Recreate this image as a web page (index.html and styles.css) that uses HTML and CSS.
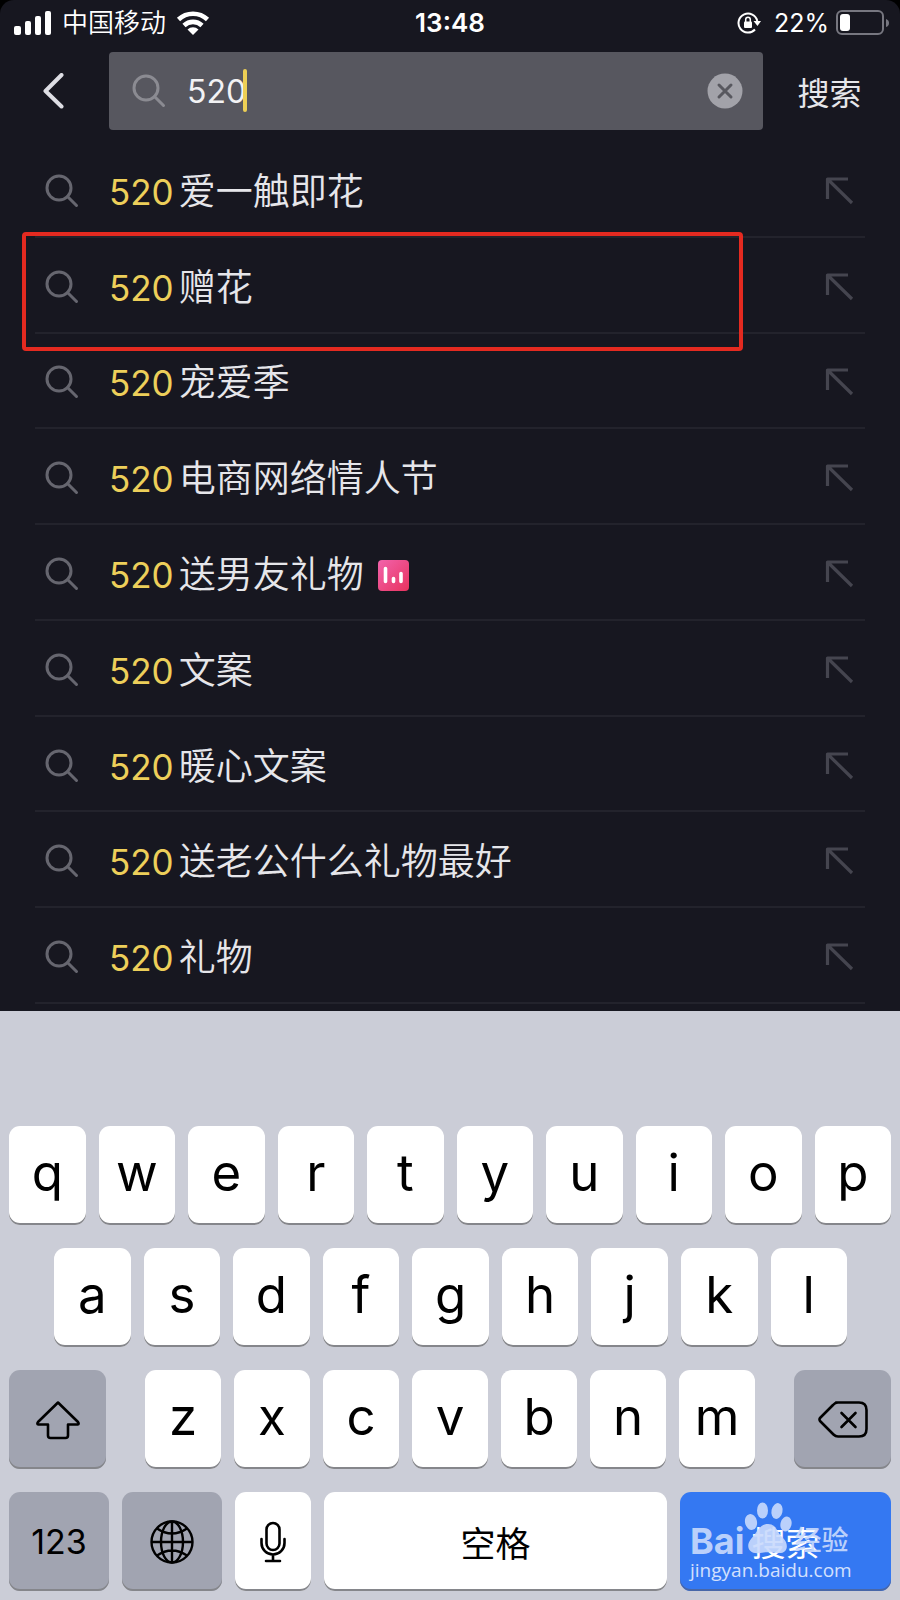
FILE: index.html
```html
<!DOCTYPE html>
<html lang="zh-CN">
<head>
<meta charset="utf-8">
<meta name="viewport" content="width=device-width, initial-scale=1">
<title>搜索</title>
<link rel="stylesheet" href="styles.css">
</head>
<body>
<svg class="defs" aria-hidden="true">
  <symbol id="lens" viewBox="0 0 34 34"><circle cx="14" cy="14" r="12" fill="none" stroke="currentColor" stroke-width="3"/><path d="M22.500 22.500L31.500 31.500" fill="none" stroke="currentColor" stroke-width="3" stroke-linecap="round"/></symbol>
  <symbol id="fill" viewBox="0 0 30 30"><path d="M24 3H3.500V23M4.500 4L28 27" fill="none" stroke="currentColor" stroke-width="3.200" stroke-linejoin="round"/></symbol>
</svg>
<div class="screen">
  <main class="app">
    <div class="status">
      <div class="status-left">
        <svg class="signal" width="38" height="24" viewBox="0 0 38 24" fill="#fff"><rect x="0" y="15" width="7" height="9" rx="2"/><rect x="11" y="10" width="6" height="14" rx="2"/><rect x="21" y="5" width="6" height="19" rx="2"/><rect x="31" y="0" width="6" height="24" rx="2"/></svg>
        <span>中国移动</span>
        <svg class="wifi" width="34" height="26" viewBox="0 0 34 26" fill="none" stroke="#fff" stroke-width="4.600"><path d="M2.500 9.500A21 21 0 0 1 31.500 9.500"/><path d="M8 15.500A13 13 0 0 1 26 15.500"/><path d="M17 25L11.500 19.500A8 8 0 0 1 22.500 19.500Z" fill="#fff" stroke="none"/></svg>
      </div>
      <time class="clock">13:48</time>
      <div class="status-right">
        <svg width="24" height="22" viewBox="0 0 24 22"><path d="M18 17.500A9.500 9.500 0 1 1 20.300 9" fill="none" stroke="#fff" stroke-width="2"/><path d="M16.500 9H24L20.500 14Z" fill="#fff"/><rect x="7" y="9.500" width="8" height="6.500" rx="1" fill="#fff"/><path d="M8.700 10V7.500a2.300 2.300 0 0 1 4.600 0v2.500" fill="none" stroke="#fff" stroke-width="1.500"/></svg>
        <span class="percent">22%</span>
        <svg class="battery" width="54" height="26" viewBox="0 0 54 26"><rect x="1" y="1" width="46" height="23" rx="5" fill="none" stroke="#777780" stroke-width="2"/><rect x="4" y="4" width="10" height="17" rx="3" fill="#fff"/><path d="M50 9Q53 10 53 13T50 17Z" fill="#777780"/></svg>
      </div>
    </div>
    <form class="search-bar">
      <button class="back" type="button" aria-label="返回"><svg width="22" height="36" viewBox="0 0 22 36"><path d="M19.500 2L3.500 18L19.500 33.500" fill="none" stroke="#dedee4" stroke-width="4" stroke-linecap="round" stroke-linejoin="round"/></svg></button>
      <div class="field">
        <svg class="lens" width="34" height="34"><use href="#lens"/></svg>
        <div class="entry"><input class="query" type="text" value="520" aria-label="搜索内容"><span class="caret"></span></div>
        <button class="clear" type="button" aria-label="清除"><svg width="36" height="36" viewBox="0 0 36 36"><circle cx="18" cy="18" r="17.500" fill="#a2a2a9"/><path d="M12 12L24 24M24 12L12 24" stroke="#58585f" stroke-width="3" stroke-linecap="round"/></svg></button>
      </div>
      <button class="submit" type="submit">搜索</button>
    </form>
    <ul class="results">
      <li class="row"><svg class="lens" width="34" height="34"><use href="#lens"/></svg><a class="term" href="#"><b>520</b>爱一触即花</a><button class="use" type="button" aria-label="填入"><svg width="30" height="30"><use href="#fill"/></svg></button></li>
      <li class="row marked"><svg class="lens" width="34" height="34"><use href="#lens"/></svg><a class="term" href="#"><b>520</b>赠花</a><button class="use" type="button" aria-label="填入"><svg width="30" height="30"><use href="#fill"/></svg></button></li>
      <li class="row"><svg class="lens" width="34" height="34"><use href="#lens"/></svg><a class="term" href="#"><b>520</b>宠爱季</a><button class="use" type="button" aria-label="填入"><svg width="30" height="30"><use href="#fill"/></svg></button></li>
      <li class="row"><svg class="lens" width="34" height="34"><use href="#lens"/></svg><a class="term" href="#"><b>520</b>电商网络情人节</a><button class="use" type="button" aria-label="填入"><svg width="30" height="30"><use href="#fill"/></svg></button></li>
      <li class="row"><svg class="lens" width="34" height="34"><use href="#lens"/></svg><a class="term" href="#"><b>520</b>送男友礼物<svg class="trend" width="31" height="31" viewBox="0 0 31 31"><defs><linearGradient id="pink" x1="0" y1="0" x2="1" y2="1"><stop offset="0" stop-color="#f263ac"/><stop offset="1" stop-color="#e8335f"/></linearGradient></defs><rect width="31" height="31" rx="4" fill="url(#pink)"/><path d="M7.500 8.500V21.500M15.500 18.500V21.500M23 13.500V21.500" stroke="#fff" stroke-width="3.600" stroke-linecap="round"/></svg></a><button class="use" type="button" aria-label="填入"><svg width="30" height="30"><use href="#fill"/></svg></button></li>
      <li class="row"><svg class="lens" width="34" height="34"><use href="#lens"/></svg><a class="term" href="#"><b>520</b>文案</a><button class="use" type="button" aria-label="填入"><svg width="30" height="30"><use href="#fill"/></svg></button></li>
      <li class="row"><svg class="lens" width="34" height="34"><use href="#lens"/></svg><a class="term" href="#"><b>520</b>暖心文案</a><button class="use" type="button" aria-label="填入"><svg width="30" height="30"><use href="#fill"/></svg></button></li>
      <li class="row"><svg class="lens" width="34" height="34"><use href="#lens"/></svg><a class="term" href="#"><b>520</b>送老公什么礼物最好</a><button class="use" type="button" aria-label="填入"><svg width="30" height="30"><use href="#fill"/></svg></button></li>
      <li class="row"><svg class="lens" width="34" height="34"><use href="#lens"/></svg><a class="term" href="#"><b>520</b>礼物</a><button class="use" type="button" aria-label="填入"><svg width="30" height="30"><use href="#fill"/></svg></button></li>
    </ul>
  </main>
  <section class="keyboard" aria-label="键盘">
    <div class="keys">
      <button class="key">q</button><button class="key">w</button><button class="key">e</button><button class="key">r</button><button class="key">t</button><button class="key">y</button><button class="key">u</button><button class="key">i</button><button class="key">o</button><button class="key">p</button>
    </div>
    <div class="keys inset">
      <button class="key">a</button><button class="key">s</button><button class="key">d</button><button class="key">f</button><button class="key">g</button><button class="key">h</button><button class="key">j</button><button class="key">k</button><button class="key">l</button>
    </div>
    <div class="keys spread">
      <button class="key gray side" aria-label="大写"><svg width="46" height="40" viewBox="0 0 46 40"><path d="M23 2.500L43 22Q44.500 24 42.500 24.500H33V35.500Q33 38 30.500 38H15.500Q13 38 13 35.500V24.500H3.500Q1.500 24 3 22Z" fill="none" stroke="#000" stroke-width="2.600" stroke-linejoin="round"/></svg></button>
      <div class="keys middle">
        <button class="key">z</button><button class="key">x</button><button class="key">c</button><button class="key">v</button><button class="key">b</button><button class="key">n</button><button class="key">m</button>
      </div>
      <button class="key gray side" aria-label="删除"><svg width="50" height="38" viewBox="0 0 50 38"><path d="M18 1.500H41Q48.500 1.500 48.500 9V28Q48.500 35.500 41 35.500H20Q17.500 35.500 15.500 33.500L2 20Q1 18.500 2 17L15 4Q17 1.500 20 1.500Z" fill="none" stroke="#000" stroke-width="2.600" stroke-linejoin="round"/><path d="M23.500 12L37.500 26M37.500 12L23.500 26" stroke="#000" stroke-width="2.600" stroke-linecap="round"/></svg></button>
    </div>
    <div class="keys">
      <button class="key gray digits">123</button>
      <button class="key gray globe" aria-label="切换键盘"><svg width="44" height="44" viewBox="0 0 44 44" fill="none" stroke="#000" stroke-width="2.400"><circle cx="22" cy="22" r="20.500"/><ellipse cx="22" cy="22" rx="11" ry="20.500"/><path d="M22 1.500V42.500M1.500 22H42.500M7 8.500Q22 18.500 37 8.500M7 35.500Q22 25.500 37 35.500"/></svg></button>
      <button class="key mic" aria-label="语音"><svg width="26" height="42" viewBox="0 0 26 42" fill="none" stroke="#000" stroke-width="2.600" stroke-linecap="round"><rect x="6.500" y="2" width="13" height="27" rx="6.500"/><path d="M1.500 18V22A11.500 11.500 0 0 0 24.500 22V18M13 34V40M6 40H20"/></svg></button>
      <button class="key space">空格</button>
      <div class="go-wrap">
        <button class="key go">搜索</button>
        <div class="watermark">
          <div class="brand"><span class="latin">Bai</span><svg class="paw" width="50" height="56" viewBox="0 0 50 56" fill="#c9dafc"><ellipse cx="7" cy="20" rx="6" ry="8" transform="rotate(-12 7 20)"/><ellipse cx="18.500" cy="8.500" rx="5.500" ry="8"/><ellipse cx="33" cy="9" rx="5.500" ry="8" transform="rotate(12 33 9)"/><ellipse cx="42" cy="22" rx="5.500" ry="7.500" transform="rotate(15 42 22)"/><path d="M24 22C33 22 33 31 39 36C46 43 43 52 34 51C28 50 22 50 16 51C5 53 1 44 7 37C13 31 15 22 24 22Z"/></svg><span class="name">经验</span></div>
          <div class="site">jingyan.baidu.com</div>
        </div>
      </div>
    </div>
  </section>
</div>
</body>
</html>
```
FILE: styles.css
```css
* { box-sizing: border-box; }
body { margin: 0; background: #000; font-family: Inter, "Noto Sans CJK SC", sans-serif; }
button { border: 0; padding: 0; background: none; font: inherit; color: inherit; }
svg { display: block; flex: none; }
.defs { position: absolute; width: 0; height: 0; }
.screen { min-height: 100vh; display: flex; flex-direction: column; }
.app { flex: 1; display: flex; flex-direction: column; padding-bottom: 7px; background: #171720; border-radius: 14px 14px 0 0; color: #e6e6ea; }

.status { display: grid; grid-template-columns: 1fr auto 1fr; align-items: center; height: 46px; padding: 0 10px; color: #fff; font-size: 26px; line-height: 32px; }
.status-left, .status-right { display: flex; align-items: center; }
.status-left { gap: 10px; padding-left: 4px; font-weight: 350; }
.status-right { justify-content: flex-end; gap: 7px; }
.percent { margin-left: 6px; font-size: 25px; }
.clock { font-weight: 600; }

.search-bar { display: flex; align-items: center; margin: 6px 0 12px; }
.back { display: flex; justify-content: center; width: 109px; padding-right: 4px; }
.field { flex: 1; min-width: 0; display: flex; align-items: center; height: 78px; padding: 0 20px 0 23px; background: #57575f; border-radius: 4px; }
.field .lens { color: #8b8b92; }
.entry { position: relative; flex: 1; min-width: 0; margin-left: 21px; }
.query { display: block; width: 100%; height: 44px; padding: 0; border: 0; outline: 0; background: none; color: #f2f2f4; font: 32px Inter, sans-serif; }
.caret { position: absolute; left: 56px; top: 0; width: 4px; height: 43px; border-radius: 2px; background: #edcf55; }
.submit { width: 137px; padding-right: 4px; font-size: 32px; }

.results { flex: 1; display: flex; flex-direction: column; list-style: none; margin: 0 35px; padding: 0; }
.row { flex: 1; display: flex; align-items: center; position: relative; padding: 4px 11px 0 10px; border-bottom: 2px solid #23232c; }
.row .lens { color: #66666f; }
.term { flex: 1; display: flex; align-items: center; margin-left: 30px; padding-top: 2px; color: inherit; text-decoration: none; font-size: 37px; line-height: 48px; font-weight: 350; }
.term b { margin-right: 5px; color: #edcf5a; font-size: 35px; font-weight: 400; }
.trend { margin-left: 14px; }
.use { color: #45454f; }
.marked::after { content: ""; position: absolute; inset: -6px 122px -19px -13px; border: 4px solid #e42a20; border-radius: 4px; pointer-events: none; }

.keyboard { display: flex; flex-direction: column; gap: 23px; padding: 115px 9px 9px; background: #cbcdd7; color: #000; }
.keys { display: flex; gap: 13px; }
.inset { padding: 0 44px 0 45px; }
.spread { gap: 39px; }
.middle { flex: 610; }
.key { flex: 1 1 0; min-width: 0; height: 99px; display: flex; align-items: center; justify-content: center; padding-bottom: 6px; background: #fff; border-radius: 11px; box-shadow: inset 0 -2px #85868b; font-size: 51px; font-weight: 400; line-height: 64px; }
.gray { background: #a1a4b1; padding-bottom: 0; }
.side { flex: 97; }
.digits, .globe { flex: 100; }
.digits { font-size: 34px; }
.mic { flex: 76; padding-bottom: 0; }
.space { flex: 343; font-size: 35px; padding: 4px 0 0; }
.go-wrap { flex: 211; position: relative; display: flex; }
.go { background: #3478f2; box-shadow: inset 0 -2px #4867a8; color: #fff; font-size: 34px; padding: 4px 0 0; }
.watermark { position: absolute; left: 10px; top: 12px; color: #c9dafc; pointer-events: none; opacity: 0.9; }
.brand { display: flex; align-items: flex-end; height: 54px; font-size: 27px; line-height: 34px; font-weight: 700; }
.latin { font-size: 36px; }
.name { font-weight: 500; }
.site { font: 19px/24px "Open Sans", sans-serif; color: #e4edff; }
```
